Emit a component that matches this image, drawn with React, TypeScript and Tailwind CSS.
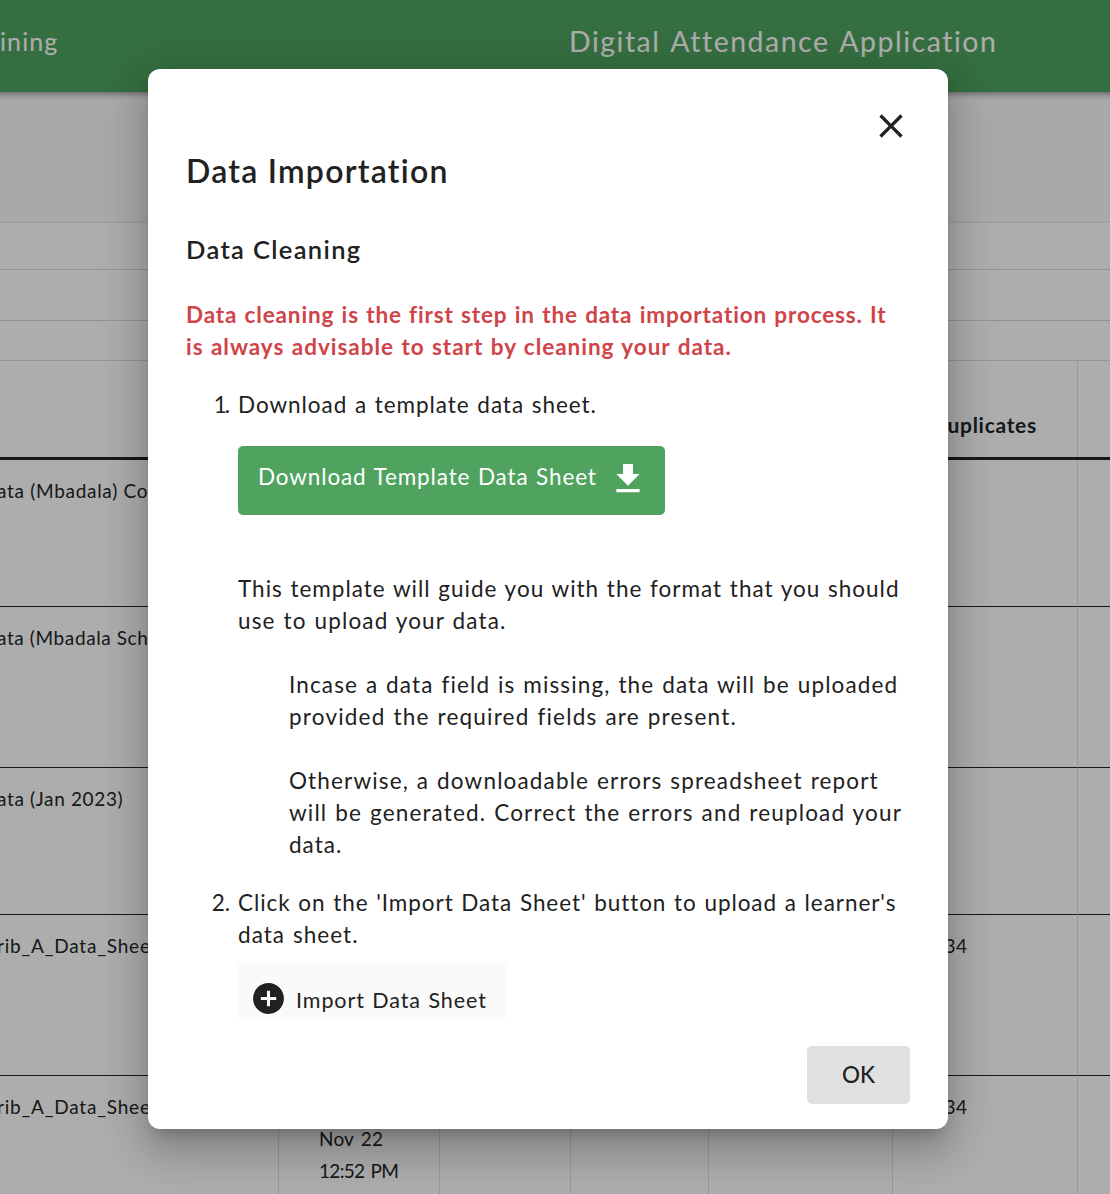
import React from "react";
import { MdAddCircle, MdClose } from "react-icons/md";

const columns = "grid grid-cols-[279px_161px_131px_138px_184px_185px_1fr]";

type Row = { name: string; date: string[]; duplicates: string; height: string; tone: string };

const rows: Row[] = [
  { name: "ata (Mbadala) Co", date: [], duplicates: "", height: "h-[147px]", tone: "tracking-[0.7px] [word-spacing:0px]" },
  { name: "ata (Mbadala Sch", date: [], duplicates: "", height: "h-[161px]", tone: "tracking-[0.6px] [word-spacing:0px]" },
  { name: "ata (Jan 2023)", date: [], duplicates: "", height: "h-[147px]", tone: "tracking-[0.65px] [word-spacing:0px]" },
  { name: "rib_A_Data_Sheet", date: [], duplicates: "234", height: "h-[161px]", tone: "tracking-[0.8px]" },
  { name: "rib_A_Data_Sheet", date: ["", "Nov 22", "12:52 PM"], duplicates: "234", height: "h-[161px]", tone: "tracking-[0.8px]" },
];

function Cell({ children, className = "" }: { children?: React.ReactNode; className?: string }) {
  return (
    <div className={`border-r border-r-[#dee2e6] border-b border-b-[#212529] pt-[15px] whitespace-nowrap last:border-r-0 ${className}`}>
      {children}
    </div>
  );
}

function Page() {
  return (
    <div className="flex h-full flex-col bg-[#fafafa] text-[#212529]">
      <header className="relative -mx-5 flex h-[92px] shrink-0 bg-[#4fa35f] px-5 text-white shadow-[0_2px_4px_-1px_rgba(0,0,0,0.2),0_4px_5px_0_rgba(0,0,0,0.14),0_1px_10px_0_rgba(0,0,0,0.12)]">
        <div className="w-[569px] pt-[21px] text-[25px] leading-[40px] tracking-[1.1px]">ining</div>
        <div className="pt-[21px] text-[28.5px] leading-[40px] tracking-[1.5px] whitespace-nowrap [word-spacing:2px]">
          Digital Attendance Application
        </div>
      </header>
      <main className="mt-[131px] flex-1 bg-white shadow-[0_2px_4px_rgba(0,0,0,0.14),0_0_3px_rgba(0,0,0,0.12)]">
        <div className="h-[47px] border-b border-[#d8d8d8]" />
        <div className="h-[51px] border-b border-[#d3d8de]" />
        <div className="h-[40px] border-b border-[#dcdce0]" />
        <div className={`${columns} h-[99px] border-b-[3px] border-[#212529]`}>
          {["", "", "", "", "", "Duplicates", ""].map((h, i) => (
            <div key={i} className="border-r border-[#dee2e6] pt-[48px] pl-[38px] text-[21px] leading-8 font-bold tracking-[0.7px] last:border-r-0">
              {h}
            </div>
          ))}
        </div>
        <div className="text-[19px] leading-8">
          {rows.map((r, i) => (
            <div key={i} className={`${columns} ${r.height}`}>
              <Cell className={r.tone}>
                <span className="-ml-[3px]">{r.name}</span>
              </Cell>
              <Cell className="pl-[40px]">
                {r.date.map((d, j) => (
                  <div key={j} className="h-8 tracking-[0.2px] [word-spacing:2px] last:tracking-[-0.7px]">{d}</div>
                ))}
              </Cell>
              <Cell />
              <Cell />
              <Cell />
              <Cell className="pl-[40px] tracking-[0.5px]">{r.duplicates}</Cell>
              <Cell />
            </div>
          ))}
        </div>
      </main>
    </div>
  );
}

function DownloadIcon() {
  return (
    <svg viewBox="0 0 24 24" className="size-[40px] fill-current">
      <path d="M19 9h-4V3H9v6H5l7 7 7-7zM5 18v2h14v-2H5z" />
    </svg>
  );
}

function Dialog() {
  return (
    <div className="h-[1060px] w-[800px] rounded-xl bg-white px-[38px] pt-[37px] text-[22.5px] leading-8 whitespace-nowrap text-[#212121] [word-spacing:1px] shadow-[0_11px_15px_-7px_rgba(0,0,0,0.2),0_24px_38px_3px_rgba(0,0,0,0.14),0_9px_46px_8px_rgba(0,0,0,0.12)]">
      <div className="-mr-[0.5px] flex h-10 justify-end">
        <MdClose className="size-10" />
      </div>
      <h1 className="mt-[3px] text-[32px] leading-[44px] font-semibold tracking-[1.25px] [word-spacing:0px]">Data Importation</h1>
      <h2 className="mt-[40px] text-[25.5px] leading-8 font-semibold tracking-[1.35px] [word-spacing:0px]">Data Cleaning</h2>
      <div className="mt-[34px] font-bold text-[#cf4449]">
        <p className="tracking-[0.85px]">Data cleaning is the first step in the data importation process. It</p>
        <p className="tracking-[0.97px]">is always advisable to start by cleaning your data.</p>
      </div>

      <section className="mt-[26px] grid grid-cols-[52px_1fr]">
        <span className="pr-[10px] text-right tracking-[-2px]">1.</span>
        <div>
          <p className="tracking-[0.95px]">Download a template data sheet.</p>
          <button className="mt-[25px] flex h-[69px] w-[427px] rounded-[5px] bg-[#4fa35f] pl-[20px] text-white">
            <span className="mt-[15px] w-[338px] text-left tracking-[0.87px] [word-spacing:1px]">Download Template Data Sheet</span>
            <span className="mt-[13px] ml-[12px]"><DownloadIcon /></span>
          </button>
          <div className="mt-[58px]">
            <p className="tracking-[0.99px]">This template will guide you with the format that you should</p>
            <p className="tracking-[1.15px]">use to upload your data.</p>
          </div>
          <div className="mt-8 pl-[51px]">
            <p className="tracking-[1.13px]">Incase a data field is missing, the data will be uploaded</p>
            <p className="tracking-[1.2px]">provided the required fields are present.</p>
          </div>
          <div className="mt-8 pl-[51px]">
            <p className="tracking-[1.15px]">Otherwise, a downloadable errors spreadsheet report</p>
            <p className="tracking-[1.16px]">will be generated. Correct the errors and reupload your</p>
            <p className="tracking-[1px]">data.</p>
          </div>
        </div>
      </section>

      <section className="mt-[26px] grid grid-cols-[52px_1fr]">
        <span className="pr-[8px] text-right">2.</span>
        <div>
          <p className="tracking-[0.94px]">Click on the 'Import Data Sheet' button to upload a learner's</p>
          <p className="tracking-[1.05px]">data sheet.</p>
          <div className="mt-[12px] flex h-[57px] w-[268px] bg-[#fafafa] pt-[17px] pl-3">
            <MdAddCircle className="size-[37px]" />
            <span className="mt-[4px] ml-[9px] text-[21.5px] tracking-[0.92px]">Import Data Sheet</span>
          </div>
        </div>
      </section>

      <div className="mt-[26px] flex justify-end">
        <button className="h-[58px] w-[103px] rounded-[5px] bg-[#e0e0e0] font-medium">OK</button>
      </div>
    </div>
  );
}

export default function App() {
  return (
    <div className="relative h-[1194px] w-[1110px] overflow-hidden font-[Lato,sans-serif]">
      <Page />
      <div className="absolute inset-0 bg-black/32 pt-[69px] pl-[148px]">
        <Dialog />
      </div>
    </div>
  );
}
